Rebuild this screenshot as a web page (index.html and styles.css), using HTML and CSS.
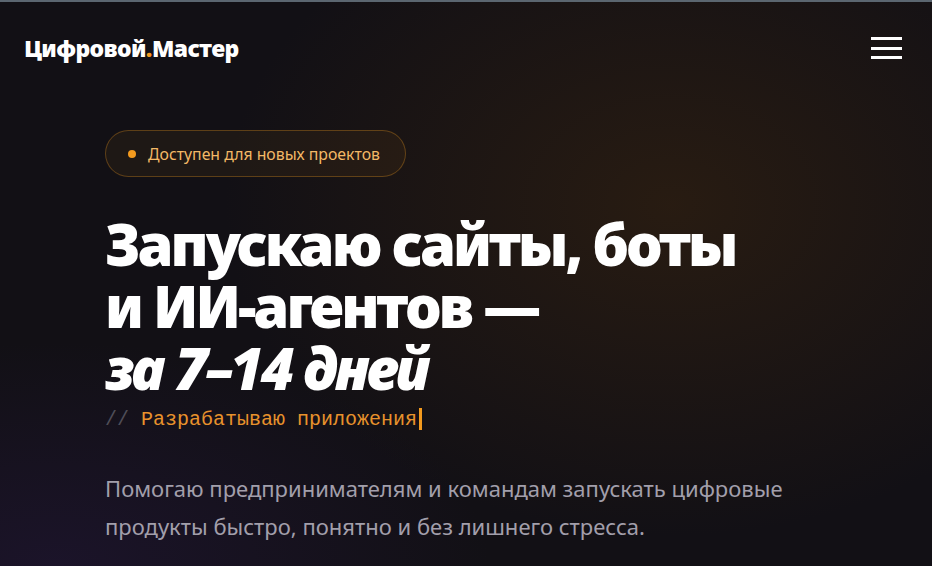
FILE: index.html
```html
<!DOCTYPE html>
<html lang="ru">
<head>
<meta charset="utf-8">
<title>Цифровой.Мастер</title>
<link rel="stylesheet" href="styles.css">
</head>
<body>
<div class="page">
  <header class="header">
    <a class="logo" href="#">Цифровой<span class="logo-dot">.</span>Мастер</a>
    <button class="burger" aria-label="Меню"><span></span><span></span><span></span></button>
  </header>
  <main class="hero">
    <div class="badge"><span class="badge-dot"></span>Доступен для новых проектов</div>
    <h1 class="title"><span class="line">Запускаю сайты, боты</span><span class="line">и ИИ-агентов —</span><em class="line">за 7–14 дней</em></h1>
    <div class="typing"><span class="typing-slash">// </span><span class="typing-text">Разрабатываю приложения</span><span class="cursor"></span></div>
    <p class="lead">Помогаю предпринимателям и командам запускать цифровые продукты быстро, понятно и без лишнего стресса.</p>
  </main>
</div>
</body>
</html>
```

FILE: styles.css
```css
* { box-sizing: border-box; }
html, body { margin: 0; padding: 0; height: 100%; }
body {
  background: #111015;
  font-family: "Noto Sans", "Open Sans", sans-serif;
  color: #fff;
  overflow: hidden;
}
.page {
  min-height: 100%;
  border-top: 2px solid #5b6670;
  background:
    radial-gradient(ellipse 620px 460px at 72% 36%, rgba(64, 40, 14, 0.48), rgba(64, 40, 14, 0) 72%),
    radial-gradient(ellipse 620px 320px at 6% 100%, rgba(38, 24, 66, 0.45), rgba(38, 24, 66, 0) 70%),
    #121015;
}
.header {
  display: flex;
  justify-content: space-between;
  align-items: center;
  padding: 22px 30px 0 24px;
  height: 70px;
}
.logo {
  font-weight: 900;
  font-size: 23px;
  letter-spacing: -0.6px;
  color: #fff;
  text-decoration: none;
}
.logo-dot { color: #f39a1e; }
.burger {
  width: 31px;
  height: 22px;
  padding: 0;
  border: 0;
  background: none;
  display: flex;
  flex-direction: column;
  justify-content: space-between;
  cursor: pointer;
}
.burger span { display: block; height: 3px; background: #fff; }
.hero {
  max-width: 722px;
  margin: 0 auto;
  padding-top: 58px;
}
.badge {
  display: inline-flex;
  align-items: center;
  gap: 12px;
  height: 47px;
  padding: 0 25px 0 22px;
  border: 1px solid rgba(242, 154, 30, 0.3);
  border-radius: 24px;
  background: rgba(242, 154, 30, 0.06);
  color: #f3b866;
  font-size: 15.8px;
}
.badge-dot {
  width: 8px; height: 8px; border-radius: 50%;
  background: #f39a1e;
}
.title {
  margin: 36px 0 0;
  font-weight: 900;
  font-size: 58px;
  line-height: 62px;
  letter-spacing: -3px;
  color: #fff;
}
.title .line { display: block; white-space: nowrap; }
.title em { font-style: italic; }
.typing {
  margin-top: 8px;
  font-family: "Liberation Mono", "Courier New", monospace;
  font-size: 20px;
  line-height: 26px;
  white-space: pre;
}
.typing-slash { color: #4f4d57; }
.typing-text { color: #e8922c; }
.cursor { display: inline-block; width: 3px; height: 22px; background: #f39a1e; margin-left: 2px; vertical-align: -5px; }
.lead {
  margin: 36px 0 0;
  font-size: 22px;
  line-height: 38px;
  color: #a29fab;
}
```
